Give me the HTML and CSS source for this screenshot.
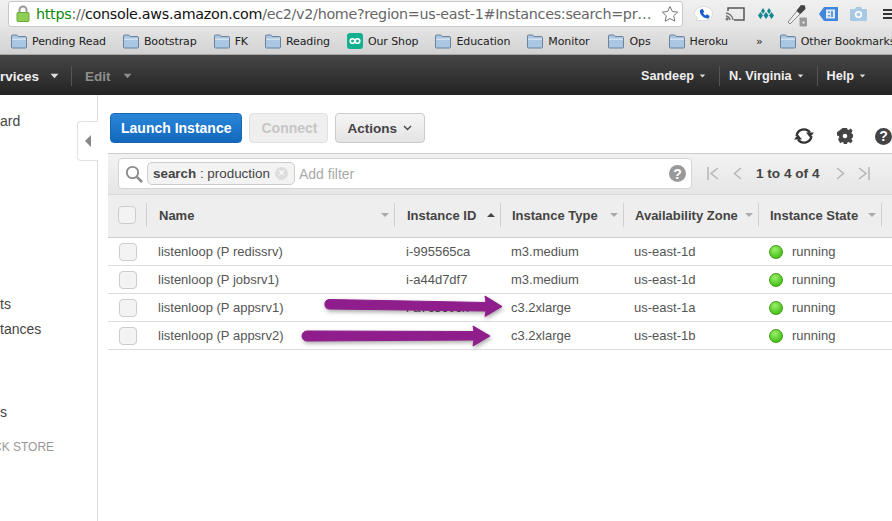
FILE: index.html
```html
<!DOCTYPE html>
<html lang="en">
<head>
<meta charset="utf-8">
<title>EC2 Instances</title>
<link rel="stylesheet" href="styles.css">
</head>
<body>
<svg class="defs" width="0" height="0" aria-hidden="true">
  <symbol id="folder" viewBox="0 0 16 15">
    <path d="M.5 3V2Q.5 1 1.5 1h4Q6.500 1 7 2.500h7.500q1 0 1 1V13q0 1-1 1h-13q-1 0-1-1z" fill="#a9c6e2" stroke="#6d8298"/>
    <path d="M1 4.500h14V6H1z" fill="#d3e2f0"/>
  </symbol>
  <symbol id="caret" viewBox="0 0 8 5">
    <path d="M.5.500h7L4 4.500z" fill="currentColor"/>
  </symbol>
</svg>

<header class="toolbar">
  <div class="urlbar">
    <svg class="lock" width="14" height="17" viewBox="0 0 14 17"><path d="M3.500 8V5a3.500 3.500 0 0 1 7 0v3" fill="none" stroke="#9a9a9a" stroke-width="2"/><rect x="1" y="7.500" width="12" height="9" rx="1" fill="#8fce55" stroke="#6aa83a"/></svg>
    <span class="url"><span class="scheme">https</span><span class="dim">://</span>console.aws.amazon.com<span class="dim">/ec2/v2/home?region=us-east-1#Instances:search=pr…</span></span>
    <svg class="star" width="18" height="18" viewBox="0 0 18 18"><path d="M9 1.500l2.300 5 5.400.6-4 3.700 1.100 5.400L9 13.500l-4.800 2.700 1.100-5.400-4-3.700 5.400-.6z" fill="#fff" stroke="#777"/></svg>
  </div>
  <div class="exts">
    <svg width="19" height="16" viewBox="0 0 19 16"><path d="M9.500.5c5 0 9 2.800 9 7s-4 7-9 7H2l1.500-3C1.500 10 .5 9 .5 7.500c0-4.200 4-7 9-7z" fill="#fff" stroke="#d8d8d8"/><path d="M6 4l2.500-1.200 1.800 3-1.200 1.200c.5 1.200 1.300 2 2.500 2.500l1.200-1.200 3 1.800L14.500 12.500C10 13 5 8.500 6 4z" fill="#1a5fd0"/></svg>
    <svg width="20" height="16" viewBox="0 0 20 16"><path d="M3 5V2h16v12H9" fill="none" stroke="#555" stroke-width="1.500"/><path d="M1 7a8 8 0 0 1 7 7M1 10a5 5 0 0 1 4 4" fill="none" stroke="#777" stroke-width="1.500"/><circle cx="2" cy="13" r="1.500" fill="#777"/></svg>
    <svg width="18" height="12" viewBox="0 0 18 12"><path d="M3.500 4L6 7.500 3.500 11 1 7.500zM9 4l2.500 3.500L9 11 6.500 7.500zM14.500 4L17 7.500 14.500 11 12 7.500zM6 0l2 3-2 3-2-3zM12 0l2 3-2 3-2-3z" fill="#14868f"/></svg>
    <svg class="dropper" width="20" height="24" viewBox="0 0 20 24"><path d="M1 19L10 8l3 3L3 21z" fill="#eee" stroke="#888"/><path d="M9.500 7.500L14 2l4 .5.500 3.500-5 5z" fill="#444"/><rect x="12.500" y="14.500" width="7.500" height="9" rx="1" fill="#999"/><rect x="15.500" y="18.500" width="2" height="2" fill="#eee"/></svg>
    <svg width="19" height="14" viewBox="0 0 19 14"><path d="M5 0h14v14H5L0 7z" fill="#3f86dc"/><rect x="7" y="2.500" width="9" height="9" fill="#dceafa"/><path d="M10 4.500v1.500M10 8v1.500M13 4v6" stroke="#2f6fc0" stroke-width="1.300"/></svg>
    <svg width="17" height="14" viewBox="0 0 17 14"><path d="M1 2h4l1-2h5l1 2h4q1 0 1 1v10q0 1-1 1H1q-1 0-1-1V3q0-1 1-1z" fill="#a9c8e4"/><circle cx="8.500" cy="7.500" r="3.600" fill="#fff"/><circle cx="8.500" cy="7.500" r="2" fill="#a9c8e4"/></svg>
    <span class="menu"></span>
  </div>
</header>

<nav class="bookmarks">
  <a class="bm"><svg width="16" height="15"><use href="#folder"/></svg>Pending Read</a>
  <a class="bm"><svg width="16" height="15"><use href="#folder"/></svg>Bootstrap</a>
  <a class="bm"><svg width="16" height="15"><use href="#folder"/></svg>FK</a>
  <a class="bm"><svg width="16" height="15"><use href="#folder"/></svg>Reading</a>
  <a class="bm"><svg width="16" height="16" viewBox="0 0 16 16"><rect width="16" height="16" rx="3" fill="#12b08e"/><circle cx="5.500" cy="8" r="2.300" fill="none" stroke="#fff" stroke-width="1.600"/><circle cx="10.500" cy="8" r="2.300" fill="none" stroke="#fff" stroke-width="1.600"/></svg>Our Shop</a>
  <a class="bm"><svg width="16" height="15"><use href="#folder"/></svg>Education</a>
  <a class="bm"><svg width="16" height="15"><use href="#folder"/></svg>Monitor</a>
  <a class="bm"><svg width="16" height="15"><use href="#folder"/></svg>Ops</a>
  <a class="bm"><svg width="16" height="15"><use href="#folder"/></svg>Heroku</a>
  <span class="more">»</span>
  <a class="bm"><svg width="16" height="15"><use href="#folder"/></svg>Other Bookmarks</a>
</nav>

<nav class="awsnav">
  <a class="nav-item services">rvices <svg class="caret-lg" width="9" height="6"><use href="#caret"/></svg></a>
  <a class="nav-item edit">Edit <svg class="caret-lg" width="9" height="6"><use href="#caret"/></svg></a>
  <div class="nav-right">
    <a class="nav-item user">Sandeep <svg width="7" height="4"><use href="#caret"/></svg></a>
    <a class="nav-item region">N. Virginia <svg width="7" height="4"><use href="#caret"/></svg></a>
    <a class="nav-item help">Help <svg width="7" height="4"><use href="#caret"/></svg></a>
  </div>
</nav>

<div class="console">
  <aside class="sidebar">
    <div class="side-item s1">ard</div>
    <div class="side-item s2">ts</div>
    <div class="side-item s3">tances</div>
    <div class="side-item s4">s</div>
    <div class="side-head">CK STORE</div>
    <div class="collapse"><span class="tri"></span></div>
  </aside>

  <main class="content">
    <div class="actions">
      <button class="btn primary">Launch Instance</button>
      <button class="btn disabled">Connect</button>
      <button class="btn menu-btn">Actions <svg class="btn-caret" width="9" height="6" viewBox="0 0 9 6"><path d="M1 1l3.500 3.500L8 1" fill="none" stroke="#444" stroke-width="1.400"/></svg></button>
      <div class="tools">
        <svg width="22" height="20" viewBox="0 0 22 20"><path d="M3.500 10A7.500 7.500 0 0 1 17 6.500M18.500 10A7.500 7.500 0 0 1 5 13.500" fill="none" stroke="#333" stroke-width="2.200"/><path d="M13 6.500h8L17 11.500zM1 13.500h8L5 8.500z" fill="#333"/></svg>
        <svg width="16" height="16" viewBox="0 0 16 16"><path d="M6.500 0h3l.4 2.200 1.400.6L13.200 1.500l2.100 2.100-1.300 1.900.6 1.400 2.200.4v3l-2.200.4-.6 1.400 1.300 1.900-2.100 2.100-1.900-1.300-1.400.6-.4 2.200h-3l-.4-2.200-1.400-.6-1.900 1.300L.7 12.100 2 10.200l-.6-1.400L-.8 8.400v-3" fill="#444" transform="translate(.4 -.9)"/><circle cx="8" cy="8" r="5.500" fill="#444"/><circle cx="8" cy="8" r="2.300" fill="#fff"/></svg>
        <span class="q dark">?</span>
      </div>
    </div>

    <div class="filterbar">
      <div class="search">
        <svg class="mag" width="18" height="18" viewBox="0 0 18 18"><circle cx="7.500" cy="7.500" r="5.700" fill="none" stroke="#8a8a8a" stroke-width="1.800"/><path d="M11.800 11.800L17 17" stroke="#8a8a8a" stroke-width="2.600"/></svg>
        <span class="chip"><b>search</b> : production<span class="chip-x">×</span></span>
        <span class="add">Add filter</span>
        <span class="q grey">?</span>
      </div>
      <div class="pager">
        <svg width="12" height="13" viewBox="0 0 12 13"><path d="M1 0v13M11 1L4 6.500 11 12" fill="none" stroke="#b5b5b5" stroke-width="1.500"/></svg>
        <svg width="9" height="13" viewBox="0 0 9 13"><path d="M8 1L1.500 6.500 8 12" fill="none" stroke="#b5b5b5" stroke-width="1.500"/></svg>
        <span class="count">1 to 4 of 4</span>
        <svg width="9" height="13" viewBox="0 0 9 13"><path d="M1 1l6.500 5.500L1 12" fill="none" stroke="#b5b5b5" stroke-width="1.500"/></svg>
        <svg width="12" height="13" viewBox="0 0 12 13"><path d="M11 0v13M1 1l7 5.500L1 12" fill="none" stroke="#b5b5b5" stroke-width="1.500"/></svg>
      </div>
    </div>

    <div class="row head">
      <div class="cell check"><span class="box"></span></div>
      <div class="cell">Name<span class="sort"></span></div>
      <div class="cell">Instance ID<span class="sort up"></span></div>
      <div class="cell">Instance Type<span class="sort"></span></div>
      <div class="cell">Availability Zone<span class="sort"></span></div>
      <div class="cell">Instance State<span class="sort"></span></div>
    </div>
    <div class="row item">
      <div class="cell check"><span class="box"></span></div>
      <div class="cell">listenloop (P redissrv)</div>
      <div class="cell">i-995565ca</div>
      <div class="cell">m3.medium</div>
      <div class="cell">us-east-1d</div>
      <div class="cell"><span class="dot"></span>running</div>
    </div>
    <div class="row item">
      <div class="cell check"><span class="box"></span></div>
      <div class="cell">listenloop (P jobsrv1)</div>
      <div class="cell">i-a44d7df7</div>
      <div class="cell">m3.medium</div>
      <div class="cell">us-east-1d</div>
      <div class="cell"><span class="dot"></span>running</div>
    </div>
    <div class="row item">
      <div class="cell check"><span class="box"></span></div>
      <div class="cell">listenloop (P appsrv1)</div>
      <div class="cell">i-a7c8c0ch</div>
      <div class="cell">c3.2xlarge</div>
      <div class="cell">us-east-1a</div>
      <div class="cell"><span class="dot"></span>running</div>
    </div>
    <div class="row item">
      <div class="cell check"><span class="box"></span></div>
      <div class="cell">listenloop (P appsrv2)</div>
      <div class="cell">i-f89c0a5e</div>
      <div class="cell">c3.2xlarge</div>
      <div class="cell">us-east-1b</div>
      <div class="cell"><span class="dot"></span>running</div>
    </div>
  </main>
</div>

<svg class="arrows" width="892" height="521" viewBox="0 0 892 521" aria-hidden="true">
  <path d="M329 299.500L486 302.500L485 296L502 306.500L485 316.500L486 311L329 309A4.800 4.800 0 0 1 329 299.500Z" fill="#8f1d8c" stroke="#8f1d8c" stroke-linejoin="round"/>
  <path d="M307 331L474 331.500L473 326L490 336L473 346L474 340L307 341A5 5 0 0 1 307 331Z" fill="#8f1d8c" stroke="#8f1d8c" stroke-linejoin="round"/>
</svg>
</body>
</html>
```
FILE: styles.css
```css
* { box-sizing: border-box; }
html, body { margin: 0; padding: 0; }
body {
  width: 892px;
  height: 521px;
  overflow: hidden;
  position: relative;
  background: #fff;
  font-family: "Liberation Sans", Arial, sans-serif;
  display: flex;
  flex-direction: column;
}
.defs { position: absolute; }

/* browser chrome */
.toolbar {
  height: 28px;
  flex: none;
  display: flex;
  align-items: flex-start;
  padding: 1px 0 0 8px;
  background: linear-gradient(#f0f0f0, #e6e6e6);
  overflow: hidden;
}
.urlbar {
  flex: 0 0 675px;
  height: 26px;
  background: #fff;
  border: 1px solid #c8c8c8;
  border-radius: 3px;
  display: flex;
  align-items: center;
  padding-left: 7px;
  white-space: nowrap;
  overflow: hidden;
}
.lock { flex: none; margin: -2px 6px 0 0; }
.url {
  font-family: "DejaVu Sans", sans-serif;
  font-size: 14.3px;
  letter-spacing: -.02em;
  color: #111;
  flex: 1;
  overflow: hidden;
}
.scheme { color: #0a8a0a; }
.dim { color: #666; }
.star { flex: none; margin-right: 3px; }
.exts {
  flex: 1;
  display: flex;
  align-items: center;
  gap: 12px;
  height: 28px;
  padding: 0 0 3px 11px;
}
.dropper { margin-top: 2px; }
.menu {
  width: 14px;
  height: 10px;
  flex: none;
  margin-left: 4px;
  border-top: 2px solid #333;
  border-bottom: 2px solid #333;
  background: linear-gradient(#333, #333) center / 100% 2px no-repeat;
}

.bookmarks {
  height: 27px;
  flex: none;
  display: flex;
  align-items: center;
  gap: 17px;
  padding: 0 0 0 11px;
  background: linear-gradient(#e4e4e4, #d2d2d2);
  border-bottom: 1px solid #a8a8a8;
  font-family: "DejaVu Sans", sans-serif;
  font-size: 11px;
  letter-spacing: -.1px;
  color: #222;
  white-space: nowrap;
  overflow: hidden;
}
.bm { display: flex; align-items: center; gap: 5px; flex: none; }
.bm:nth-of-type(8) { margin-left: 2px; }
.bm:nth-of-type(9) { margin-left: 1px; }
.more { margin: 0 0 0 11px; }

/* AWS nav */
.awsnav {
  height: 40px;
  flex: none;
  display: flex;
  align-items: center;
  padding-top: 2px;
  background: linear-gradient(#464646, #232323);
  color: #eee;
  font-size: 13px;
  white-space: nowrap;
}
.nav-item { display: flex; align-items: center; gap: 5px; height: 20px; }
.nav-item svg { color: #ddd; }
.services { font-weight: bold; font-size: 13.5px; padding-right: 12px; border-right: 1px solid #555; gap: 11px; }
.caret-lg { flex: none; }
.edit { font-weight: bold; font-size: 13.5px; color: #8e8e8e; padding-left: 13px; gap: 12px; }
.edit svg { color: #8e8e8e; }
.nav-right { margin-left: auto; display: flex; font-weight: bold; font-size: 12.7px; padding-right: 26px; }
.user { padding-right: 13px; border-right: 1px solid #555; }
.region { padding: 0 13px 0 9px; border-right: 1px solid #555; }
.help { padding-left: 9px; }

/* console layout */
.console { flex: 1; display: flex; min-height: 0; }
.sidebar {
  width: 98px;
  flex: none;
  position: relative;
  border-right: 1px solid #ddd;
  color: #444;
  font-size: 14px;
  line-height: 20px;
  white-space: nowrap;
}
.side-item { height: 20px; }
.s1 { margin-top: 16px; }
.s2 { margin-top: 163px; }
.s3 { margin-top: 5px; }
.s4 { margin-top: 63px; }
.side-head { margin: 15px 0 0 -7px; font-size: 12px; color: #999; }
.collapse {
  position: absolute;
  top: 26px;
  right: -1px;
  width: 21px;
  height: 40px;
  background: #fff;
  border: 1px solid #e2e2e2;
  border-right: 0;
  border-radius: 4px 0 0 4px;
  display: flex;
  align-items: center;
  justify-content: center;
}
.tri { width: 0; height: 0; border: 6px solid transparent; border-left: 0; border-right: 6px solid #888; }

.content { flex: 1; min-width: 0; padding-left: 10px; }
.actions {
  height: 58px;
  display: flex;
  align-items: flex-start;
  gap: 7px;
  padding: 18px 0 0 2px;
}
.btn {
  height: 30px;
  padding: 0 11px;
  border: 1px solid #ccc;
  border-radius: 4px;
  background: linear-gradient(#f5f5f5, #e4e4e4);
  font: bold 14px "Liberation Sans", Arial, sans-serif;
  color: #444;
  display: flex;
  align-items: center;
  gap: 7px;
}
.btn.primary {
  color: #fff;
  background: linear-gradient(#2a86d8, #1268bd);
  border-color: #1a66ae;
  padding: 0 10px;
}
.btn.disabled { color: #c6c6c6; background: #efefef; border-color: #e0e0e0; padding: 0 10px 0 11px; }
.btn.menu-btn { font-size: 13.5px; padding: 0 12px 0 11px; gap: 6px; }
.tools {
  margin-left: auto;
  display: flex;
  align-items: center;
  gap: 22px;
  margin-top: 13px;
  height: 20px;
}
.q {
  display: inline-flex;
  align-items: center;
  justify-content: center;
  border-radius: 50%;
  color: #fff;
  font-weight: bold;
  flex: none;
}
.q.dark { width: 17px; height: 17px; background: #444; font-size: 14px; }
.q.grey { width: 17px; height: 17px; background: #999; font-size: 14px; margin: 0 5px 0 auto; }

.filterbar {
  height: 42px;
  display: flex;
  align-items: flex-start;
  padding: 4px 0 0 10px;
  background: linear-gradient(#f2f2f2, #e6e6e6);
  border-top: 1px solid #ccc;
  border-bottom: 1px solid #d8d8d8;
}
.search {
  width: 574px;
  height: 31px;
  flex: none;
  display: flex;
  align-items: center;
  padding-left: 6px;
  background: #fff;
  border: 1px solid #d4d4d4;
  border-radius: 4px;
}
.mag { flex: none; margin-right: 4px; }
.chip {
  height: 23px;
  width: 148px;
  flex: none;
  display: flex;
  align-items: center;
  padding-left: 5px;
  white-space: pre;
  border: 1px solid #ccc;
  border-radius: 5px;
  background: #f3f3f3;
  font-size: 13.4px;
  color: #444;
}
.chip-x {
  width: 13px;
  height: 13px;
  margin-left: auto;
  margin-right: 6px;
  border-radius: 50%;
  background: #ddd;
  color: #fff;
  font-size: 12px;
  line-height: 13px;
  text-align: center;
}
.add { margin-left: 4px; font-size: 14px; color: #aaa; }
.pager {
  display: flex;
  align-items: center;
  height: 31px;
  padding-left: 15px;
  gap: 14px;
}
.pager svg:nth-child(4) { margin-left: 3px; }
.pager svg:nth-child(5) { margin-left: -1px; }
.count { font-weight: bold; font-size: 13.6px; color: #444; white-space: nowrap; }

.row {
  display: grid;
  grid-template-columns: 39px 248px 106px 123px 135px 123px 1fr;
}
.cell {
  display: flex;
  align-items: center;
  white-space: nowrap;
  min-width: 0;
}
.head {
  height: 43px;
  background: #eee;
  border-bottom: 1px solid #ccc;
  font-weight: bold;
  font-size: 13px;
  color: #444;
}
.head .cell {
  padding-left: 12px;
  margin: 8px 0 10px;
  border-right: 1px solid #d0d0d0;
}
.head .cell:nth-child(n+4) { padding-left: 11px; }
.head .check { padding-left: 0; }
.sort {
  margin-left: auto;
  margin-right: 5px;
  width: 0;
  height: 0;
  border: 4px solid transparent;
  border-bottom: 0;
  border-top: 4px solid #aaa;
}
.sort.up {
  border-top: 0;
  border-bottom: 4px solid #444;
}
.check { justify-content: center; }
.box {
  width: 18px;
  height: 18px;
  border: 1px solid #ccc;
  border-radius: 4px;
  background: #f3f3f3;
}
.item {
  height: 28px;
  border-bottom: 1px solid #ddd;
  font-size: 13px;
  color: #555;
}
.item .cell { padding-left: 11px; }
.item .cell:nth-child(n+4) { padding-left: 10px; }
.item .check { padding-left: 0; }
.dot {
  width: 14px;
  height: 14px;
  flex: none;
  margin-right: 9px;
  border-radius: 50%;
  border: 1px solid #3f9a14;
  background: radial-gradient(circle at 40% 30%, #9cf06a, #4cc41e 70%);
}

.arrows { position: absolute; left: 0; top: 0; pointer-events: none; filter: drop-shadow(1px 2px 2px rgba(0,0,0,.35)); }
```
